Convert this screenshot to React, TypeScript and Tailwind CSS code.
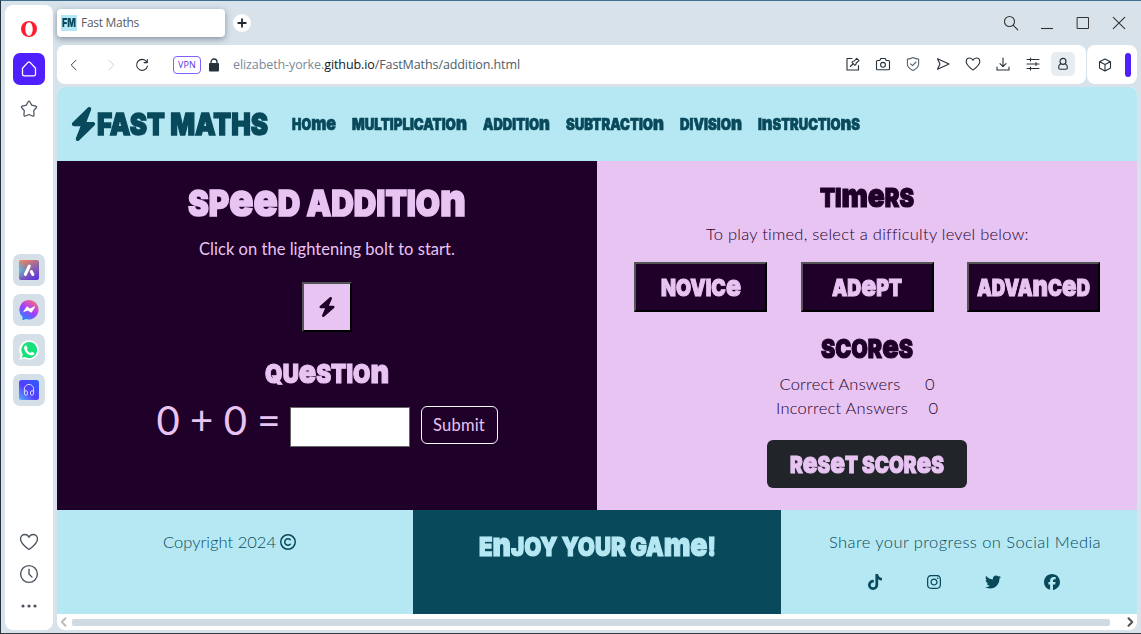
import { useLayoutEffect, useRef, type ReactNode } from 'react';
import { FaBolt, FaTiktok, FaInstagram, FaTwitter, FaFacebook, FaRegCopyright } from 'react-icons/fa6';

const DISPLAY = 'font-["Inter",sans-serif] font-black uppercase [-webkit-text-stroke:0.045em_currentColor]';
const BODY = 'font-["Lato",sans-serif] font-light';
const CHROME = 'font-["Open_Sans",sans-serif]';

/** Stretches a single line so that it fills the width of its box. */
function Fit({ className, children, spacing = false }: { className: string; children: ReactNode; spacing?: boolean }) {
  const box = useRef<HTMLSpanElement>(null);
  const line = useRef<HTMLSpanElement>(null);
  useLayoutEffect(() => {
    const b = box.current;
    const l = line.current;
    if (!b || !l) return;
    l.style.transform = 'none';
    l.style.letterSpacing = '0px';
    const natural = l.getBoundingClientRect().width;
    const target = b.getBoundingClientRect().width;
    if (spacing) {
      l.style.letterSpacing = `${(target - natural) / Math.max(1, (l.textContent ?? '').length)}px`;
    } else {
      l.style.transform = `scaleX(${target / natural})`;
    }
  }, [spacing]);
  return (
    <span ref={box} className={`block shrink-0 whitespace-nowrap ${className}`}>
      <span ref={line} className="inline-block origin-left whitespace-pre">{children}</span>
    </span>
  );
}

/** Unicase lettering: e, m and n keep their lower-case shape at capital height. */
function Display({ text, className }: { text: string; className: string }) {
  return (
    <Fit className={`${DISPLAY} ${className}`}>
      {text.split(/([emn]+)/).map((part, i) =>
        /^[emn]+$/.test(part) ? (
          <span key={i} className="text-[1.28em] leading-[0] normal-case">{part}</span>
        ) : (
          part
        ),
      )}
    </Fit>
  );
}

function Icon({ children, size = 'size-4', className = '' }: { children: ReactNode; size?: string; className?: string }) {
  return (
    <svg viewBox="0 0 16 16" fill="none" stroke="currentColor" strokeWidth="1.1" strokeLinecap="round" strokeLinejoin="round" className={`block shrink-0 ${size} ${className}`}>
      {children}
    </svg>
  );
}

const HEART = 'M8 14C6 12.5 1.2 9.3 1.2 5.6C1.2 3.4 2.8 2 4.7 2C6.2 2 7.3 2.8 8 4.2C8.7 2.8 9.8 2 11.3 2C13.2 2 14.8 3.4 14.8 5.6C14.8 9.3 10 12.5 8 14Z';

function Sidebar() {
  return (
    <aside className="flex w-12 shrink-0 flex-col items-center rounded-lg bg-white text-[#4b545e]">
      <div className="mt-4 flex h-4 items-center">
        <svg viewBox="0 0 16 16" className="size-4">
          <path fillRule="evenodd" fill="#ff1b2d" d="M8 0a8 8 0 1 0 0 16A8 8 0 0 0 8 0ZM8 1.2c2.200 0 3.700 3 3.700 6.800S10.200 14.800 8 14.800 4.300 11.800 4.300 8 5.800 1.200 8 1.200Z" />
        </svg>
      </div>
      <div className="mt-4 flex size-8 items-center justify-center rounded-[7px] bg-[#4f1fff] text-white">
        <Icon size="size-4" className="stroke-[1.3]"><path d="M1.500 7.200 6.900 1.400Q8 .4 9.100 1.400L14.500 7.200v6a1.700 1.700 0 0 1-1.700 1.700H3.200a1.700 1.700 0 0 1-1.700-1.700Z" /></Icon>
      </div>
      <div className="mt-4 flex h-4 items-center">
        <Icon size="size-[18px]"><path d="M7.300 1.600Q8 .4 8.700 1.600L10.400 4.500 13.900 5.400Q15.300 5.800 14.400 6.900L12.200 9.500 12.500 13.200Q12.500 14.700 11.200 14.200L8 12.900 4.800 14.200Q3.500 14.700 3.500 13.200L3.800 9.500 1.600 6.900Q.7 5.800 2.100 5.400L5.600 4.500Z" /></Icon>
      </div>
      <div className="mt-[137px] flex flex-col gap-2">
        <div className="flex size-8 items-center justify-center rounded-[7px] bg-[#d5dfe7]">
          <svg viewBox="0 0 20 20" className="size-5">
            <defs>
              <linearGradient id="aria" x1="0.2" y1="0" x2="0.7" y2="1"><stop offset="0" stopColor="#f08159" /><stop offset=".5" stopColor="#8d65a8" /><stop offset="1" stopColor="#6138d8" /></linearGradient>
              <linearGradient id="ariaEdge" x1="0" y1="0" x2="1" y2="0"><stop offset="0" stopColor="#51c4e8" /><stop offset=".45" stopColor="#51c4e8" stopOpacity="0" /></linearGradient>
              <linearGradient id="ariaFade" x1="0" y1="0" x2="0" y2="1"><stop offset="0" stopColor="#fff" stopOpacity="0" /><stop offset=".5" stopColor="#fff" /><stop offset="1" stopColor="#fff" stopOpacity="0" /></linearGradient>
              <mask id="ariaMask"><rect width="20" height="20" fill="url(#ariaFade)" /></mask>
            </defs>
            <rect width="20" height="20" rx="2" fill="url(#aria)" />
            <rect width="20" height="20" rx="2" fill="url(#ariaEdge)" mask="url(#ariaMask)" />
            <path d="M6.300 14.500 10.300 6" stroke="#fff" strokeWidth="3" strokeLinecap="round" />
            <path d="m12.300 11.500 1.600 3" stroke="#fff" strokeWidth="3" strokeLinecap="round" />
          </svg>
        </div>
        <div className="flex size-8 items-center justify-center rounded-[7px] bg-[#d5dfe7]">
          <svg viewBox="0 0 20 20" className="size-5">
            <defs><linearGradient id="chat" x1=".8" y1="0" x2=".2" y2="1"><stop offset="0" stopColor="#ff6b7b" /><stop offset=".5" stopColor="#a43cff" /><stop offset="1" stopColor="#1292ff" /></linearGradient></defs>
            <path d="M10 0a10 9.700 0 1 1-3.200 19L3.500 20.500V16.800A9.700 9.700 0 0 1 10 0Z" fill="url(#chat)" />
            <path d="M4 12.300 7.300 7Q8 6.200 9 6.900L11 8.400 15.700 6.300Q16.300 6.700 15.800 7.600L13 11.900Q12.200 12.900 11.200 12.200L9 10.600Z" fill="#fff" />
          </svg>
        </div>
        <div className="flex size-8 items-center justify-center rounded-[7px] bg-[#d5dfe7]">
          <svg viewBox="0 0 20 20" className="size-5">
            <path d="M10.200.2a9.700 9.700 0 1 1-4.600 18.300L.3 19.800l1.400-5A9.700 9.700 0 0 1 10.200.2Z" fill="#fff" />
            <path d="M10.200 2a8 8 0 1 1-4.100 14.900l-3.200.9.900-3.200A8 8 0 0 1 10.200 2Z" fill="#18e07a" />
            <path d="M7.200 5.300 8.700 8.400 7.800 9.600Q9 12 11.500 13l1.200-1.300 2.800 1.400Q15.400 15.300 13 15.500C9 15.400 5 11.500 5.100 7.600Q5.300 5.700 7.200 5.300Z" fill="#fff" />
          </svg>
        </div>
        <div className="flex size-8 items-center justify-center rounded-[7px] bg-[#d5dfe7]">
          <svg viewBox="0 0 20 20" className="size-5">
            <defs><linearGradient id="player" x1="0" y1="1" x2="1" y2="0"><stop offset="0" stopColor="#50b4ff" /><stop offset=".45" stopColor="#573bff" /><stop offset="1" stopColor="#2860ff" /></linearGradient></defs>
            <rect width="20" height="20" rx="2.500" fill="url(#player)" />
            <g stroke="#cfd9ff" fill="none" strokeWidth="1">
              <path d="M5.400 13V9a4.600 4.600 0 0 1 9.200 0v4" />
              <ellipse cx="7" cy="13" rx="1.600" ry="2.400" />
              <ellipse cx="13" cy="13" rx="1.600" ry="2.400" />
            </g>
          </svg>
        </div>
      </div>
      <div className="mt-auto mb-[22px] flex flex-col items-center gap-3">
        <Icon size="size-5"><path d={HEART} /></Icon>
        <Icon size="size-5"><circle cx="8" cy="8" r="6.700" /><path d="M8 4.200V8l2.400 2.500" /></Icon>
        <svg viewBox="0 0 16 4" fill="currentColor" className="mt-2 h-1 w-4"><circle cx="2" cy="2" r="1.600" /><circle cx="8" cy="2" r="1.600" /><circle cx="14" cy="2" r="1.600" /></svg>
      </div>
    </aside>
  );
}

function TitleBar() {
  return (
    <div className={`flex h-10 shrink-0 items-start text-[#333] ${CHROME}`}>
      <div className="mt-1 flex h-7 w-[168px] items-center rounded bg-white pl-1 shadow-[0_2px_6px_rgba(60,75,95,0.55)]">
        <div className="flex size-4 items-center justify-center bg-[#b4e7f5] text-[#08485a]">
          <Fit className="w-[14px] font-['Inter',sans-serif] text-[12px] leading-4 font-black">FM</Fit>
        </div>
        <Fit spacing className="ml-1 w-[58px] text-[12px] leading-4 text-[#5a5e64]">Fast Maths</Fit>
      </div>
      <div className="mt-[9px] ml-2 flex size-[18px] items-center justify-center rounded-full bg-white text-[#202830]">
        <Icon size="size-3" className="stroke-[2.4]"><path d="M8 3v10M3 8h10" /></Icon>
      </div>
      <div className="mt-[10px] mr-[10px] ml-auto flex items-center gap-[20px]">
        <Icon><circle cx="6.500" cy="6.500" r="5" /><path d="m10.300 10.300 4.500 4.500" /></Icon>
        <Icon><path d="M2 13.500h12" strokeLinecap="butt" /></Icon>
        <Icon className="stroke-1"><path d="M2.500 2.500h11v11h-11z" /></Icon>
        <Icon><path d="m2.300 2.300 11.400 11.400m0-11.400L2.300 13.700" /></Icon>
      </div>
    </div>
  );
}

function Toolbar() {
  return (
    <div className={`flex h-[39px] shrink-0 gap-px text-[#27313b] ${CHROME}`}>
      <div className="flex w-[1029px] items-center rounded-lg bg-white">
        <Icon className="ml-[9px] stroke-[0.9]"><path d="M10 3.200 5.200 8l4.800 4.800" /></Icon>
        <Icon className="ml-[21px] stroke-[0.9] text-[#c5c9cd]"><path d="M6 3.200 10.800 8 6 12.800" /></Icon>
        <Icon className="ml-[15px]"><path d="M12.600 4.700A5.500 5.500 0 1 0 13.500 9M13.300 2.500v3.100h-3.200" /></Icon>
        <div className="ml-[23px] flex h-[18px] w-7 items-center justify-center rounded border-[1.5px] border-[#8060ff] text-[#5a32e8]">
          <Fit spacing className="w-[18px] text-[9px] leading-4">VPN</Fit>
        </div>
        <svg viewBox="0 0 12 14" className="ml-[7px] h-[14px] w-3"><rect x="1" y="5" width="10" height="8.500" rx="1" fill="#27313b" /><path d="M3 5.500V4a3 3 0 0 1 6 0v1.500" stroke="#27313b" strokeWidth="1.300" fill="none" /></svg>
        <Fit spacing className="ml-[13px] w-[287px] text-[12.5px] leading-5 text-[#7a8a99]">elizabeth-yorke.<span className="text-[#111820]">github.io</span><span className="text-[#4e5d69]">/FastMaths/addition.html</span></Fit>
        <div className="mr-[11px] ml-auto flex items-center gap-[14px] pb-px">
          <Icon><path d="M7 2.500H2v11.500h11.500V9.500M5.300 10.500l2.500-2.500M7 6.300l3 3c1-.5 1.300-1.400 1.200-2.300l2.800-2.400-2.300-2.300L9.300 5C8.300 4.900 7.500 5.300 7 6.300Z" /></Icon>
          <Icon><path d="M1.500 5.500a1 1 0 0 1 1-1h2.300l1-2h4.400l1 2h2.300a1 1 0 0 1 1 1v7.300a1 1 0 0 1-1 1h-11a1 1 0 0 1-1-1Z" /><circle cx="8" cy="8.800" r="2.400" /></Icon>
          <Icon className="stroke-[#59636d]"><path d="M8 1.500c2 1.100 3.600 1.500 5.600 1.600V8c0 3-2.800 5.200-5.600 6.500C5.200 13.200 2.400 11 2.400 8V3.100C4.400 3 6 2.600 8 1.500ZM5.500 7.800l2 1.900L11 6" /></Icon>
          <Icon><path d="M2.500 2.800 14 8 2.500 13.200 5 8Z" /></Icon>
          <Icon><path d={HEART} /></Icon>
          <Icon><path d="M8 2v8.500M5 7.700l3 3 3-3M2 11v3h12v-3" /></Icon>
          <Icon><path d="M2 3.500h12M2 8h12M2 12.500h12M5.500 2v3M11 6.500v3M5.500 11v3" /></Icon>
          <div className="-ml-1 flex size-6 items-center justify-center rounded-[5px] bg-[#e7edf1]">
            <Icon size="size-[14px]" className="stroke-[1.3]"><circle cx="8" cy="5" r="3.400" /><path d="M5.300 7.600C3.600 8.500 3 10 3 12c0 1.200.6 2 1.800 2h6.400c1.200 0 1.800-.8 1.800-2 0-2-.6-3.500-2.300-4.400" /></Icon>
          </div>
        </div>
      </div>
      <div className="flex w-[50px] items-center rounded-lg bg-white pl-[10px]">
        <Icon><path d="m8 2 5.500 2.700v6.400L8 14l-5.500-2.900V4.700ZM2.700 4.800 8 7.500l5.300-2.700M8 7.500V14" /></Icon>
        <div className="ml-3 h-6 w-[6px] rounded-[3px] bg-[#4f1fff]" />
      </div>
    </div>
  );
}

const NAV = [
  { label: 'Home', width: 'w-[44px]' },
  { label: 'Multiplication', width: 'w-[115px]' },
  { label: 'Addition', width: 'w-[67px]' },
  { label: 'Subtraction', width: 'w-[98px]' },
  { label: 'Division', width: 'w-[62px]' },
  { label: 'Instructions', width: 'w-[102px]' },
];

function Header() {
  return (
    <header className="flex h-[74px] shrink-0 items-center bg-[#b6e8f4] pl-[13px] text-[#08495b]">
      <svg viewBox="0 0 448 512" preserveAspectRatio="none" fill="currentColor" className="-mt-[1px] h-[34px] w-[27px]">
        <path d="M349 44.600c6-14 1.500-30-10.800-39s-29-8-40.500 2L42 232c-10 8.800-13.500 22.900-8.900 35.300S49.700 288 63 288h111.500L99 467.400c-6 14-1.500 30 10.800 39s29 8 40.500-2L406 280c10-8.800 13.500-22.900 8.900-35.300S398.200 224 385 224H273.500Z" />
      </svg>
      <Display text="FAST MATHS" className="w-[171px] text-[30px] leading-10" />
      <nav className="ml-6 flex gap-4 pt-[2px]">
        {NAV.map((n) => <Display key={n.label} text={n.label} className={`text-[15.5px] leading-6 ${n.width}`} />)}
      </nav>
    </header>
  );
}

function Game() {
  return (
    <section className="flex w-[540px] flex-col items-center bg-[#1f0029] text-[#e8c4f3]">
      <Display text="Speed Addition" className="mt-[23px] w-[278px] text-[35.5px] leading-10" />
      <Fit spacing className="mt-[13px] w-[256px] font-['Lato',sans-serif] text-[16.5px] leading-6 font-normal">Click on the lightening bolt to start.</Fit>
      <button className="mt-[21px] flex size-[50px] items-center justify-center border-2 border-t-[#555] border-r-black border-b-black border-l-[#555] bg-[#e8c4f3] text-[#1f0029]">
        <FaBolt className="h-5 w-[18px]" />
      </button>
      <Display text="Question" className="mt-[26px] w-[124px] text-[26px] leading-8" />
      <div className="mt-4 flex w-[341px] items-start">
        <Fit spacing className="mt-[-10px] w-[124px] font-['Lato',sans-serif] text-[40px] leading-[48px] font-normal">0 + 0 =</Fit>
        <input aria-label="Answer" className="mt-[1px] ml-[9px] h-10 w-[120px] border border-[#666] bg-white" />
        <button className="ml-[11px] flex h-[38px] w-[77px] items-center justify-center rounded-md border border-[#f8f9fa]">
          <Fit spacing className="w-[52px] font-['Lato',sans-serif] text-[16.5px] leading-6">Submit</Fit>
        </button>
      </div>
    </section>
  );
}

const LEVELS = [
  { label: 'Novice', width: 'w-[80px]' },
  { label: 'Adept', width: 'w-[70px]' },
  { label: 'Advanced', width: 'w-[113px]' },
];

function Timers() {
  return (
    <section className="flex w-[540px] flex-col items-center bg-[#e8c4f3] text-[#1f0029]">
      <Display text="Timers" className="mt-[21px] w-[94px] text-[26px] leading-8" />
      <Fit spacing className={`mt-[8px] w-[322px] text-[16.5px] leading-6 ${BODY}`}>To play timed, select a difficulty level below:</Fit>
      <div className="mt-4 flex w-[466px] justify-between">
        {LEVELS.map((l) => (
          <button key={l.label} className="flex h-[50px] w-[133px] items-center justify-center border-2 border-t-[#555] border-r-black border-b-black border-l-[#555] bg-[#1f0029] pt-px text-[#e8c4f3]">
            <Display text={l.label} className={`text-[23px] leading-8 ${l.width}`} />
          </button>
        ))}
      </div>
      <Display text="Scores" className="mt-[21px] w-[92px] text-[26px] leading-8" />
      <div className={`mt-[7px] mr-5 flex w-[155px] justify-between text-[16.5px] leading-6 ${BODY}`}>
        <Fit spacing className="w-[121px]">Correct Answers</Fit><span>0</span>
      </div>
      <div className={`mr-5 flex w-[162px] justify-between text-[16.5px] leading-6 ${BODY}`}>
        <Fit spacing className="w-[132px]">Incorrect Answers</Fit><span>0</span>
      </div>
      <button className="mt-5 flex h-12 w-[200px] items-center justify-center rounded-md bg-[#212529] pt-[2px] text-[#e8c4f3]">
        <Display text="Reset Scores" className="w-[154px] text-[23px] leading-8" />
      </button>
    </section>
  );
}

function Footer() {
  return (
    <footer className="flex h-[104px] shrink-0 bg-[#b6e8f4] text-[#08495b]">
      <div className="flex w-[356px] items-start pt-5 pl-[106px]">
        <Fit spacing className={`w-[113px] text-[16.5px] leading-6 ${BODY}`}>Copyright 2024</Fit>
        <FaRegCopyright className="mt-1 ml-[4px] size-4" />
      </div>
      <div className="flex w-[368px] justify-center bg-[#08495b] pt-[21px] text-[#b6e8f4]">
        <Display text="Enjoy your game!" className="w-[237px] text-[26px] leading-8" />
      </div>
      <div className="flex w-[356px] flex-col items-center pt-5">
        <Fit spacing className={`ml-[12px] w-[272px] text-[16.5px] leading-6 ${BODY}`}>Share your progress on Social Media</Fit>
        <div className="mt-5 flex gap-[43px] pl-[9px]">
          <FaTiktok className="size-4" />
          <FaInstagram className="size-4" />
          <FaTwitter className="size-4" />
          <FaFacebook className="size-4" />
        </div>
      </div>
    </footer>
  );
}

export default function App() {
  return (
    <div className="flex h-[634px] w-[1141px] gap-1 overflow-hidden border-t border-b border-l border-t-[#3f6f8d] border-b-[#333a42] border-l-[#26323d] bg-[#d8e2ea] pt-1 pr-1 pb-[3px] pl-1">
      <Sidebar />
      <div className="flex w-[1080px] shrink-0 flex-col">
        <TitleBar />
        <Toolbar />
        <div className="mt-[3px] flex h-[543px] shrink-0 flex-col overflow-hidden rounded-lg bg-white">
          <Header />
          <main className="flex h-[349px] shrink-0">
            <Game />
            <Timers />
          </main>
          <Footer />
          <div className="flex h-4 items-center">
            <Icon size="size-3" className="ml-[1px] stroke-[2.4] text-[#bbb]"><path d="M10 3 5 8l5 5" /></Icon>
            <div className="ml-[2px] h-[7px] w-[1038px] rounded-[2px] bg-[#d0dae2]" />
            <Icon size="size-3" className="ml-[14px] stroke-[2.8] text-[#555]"><path d="m6 3 5 5-5 5" /></Icon>
          </div>
        </div>
      </div>
    </div>
  );
}
